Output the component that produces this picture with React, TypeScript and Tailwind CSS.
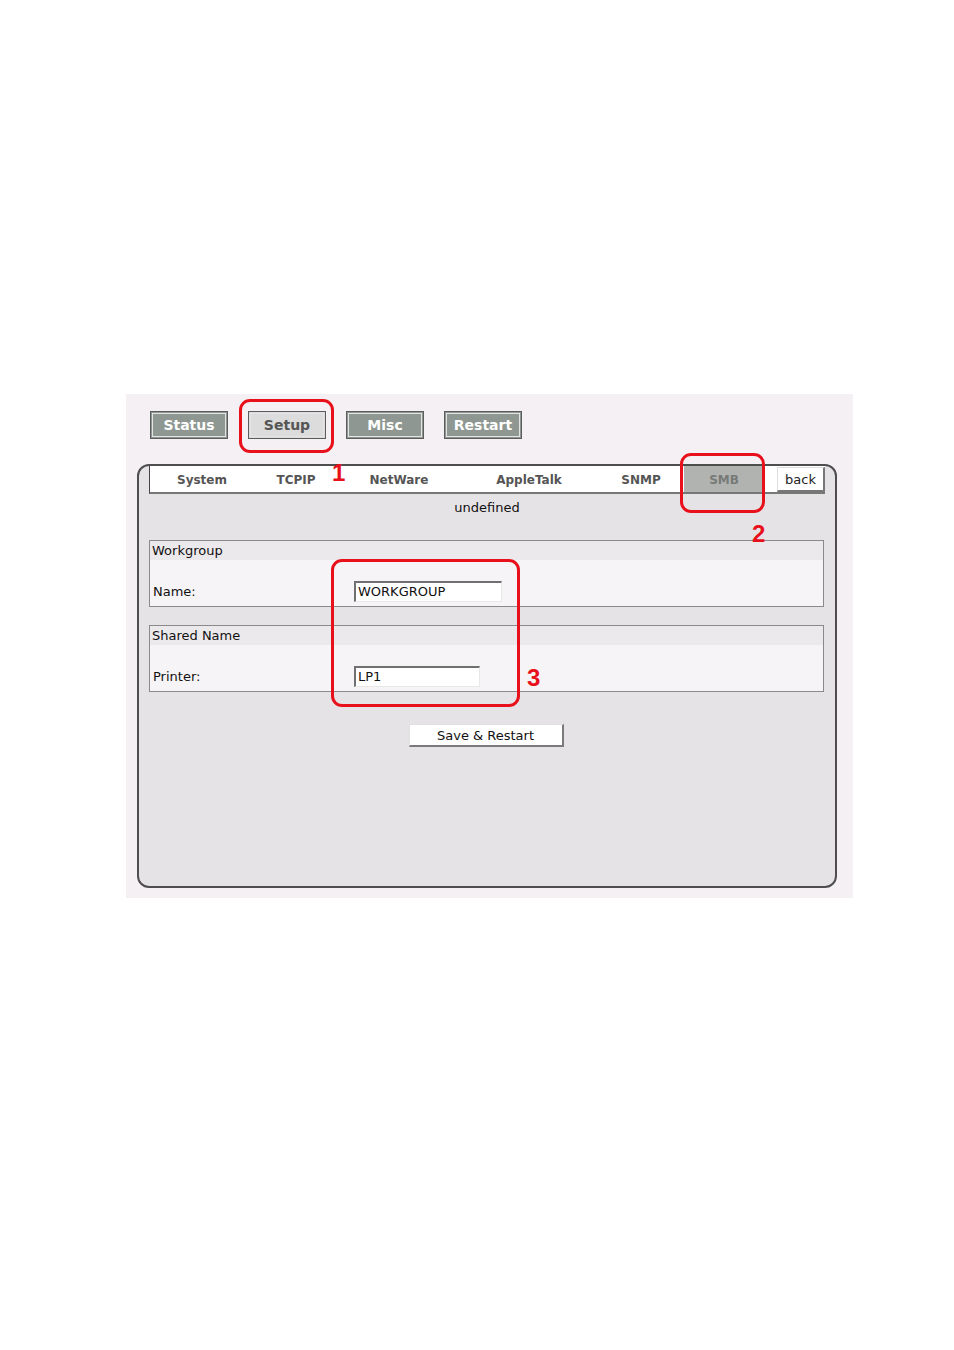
import React from "react";

const F = { fontFamily: '"DejaVu Sans", Verdana, sans-serif' };

function TopButton({ label, active }: { label: string; active?: boolean }) {
  return (
    <div
      className={`w-[78px] h-[28px] border border-[#5c5c5c] p-[1px] ${active ? "bg-[#dcdcdc]" : "bg-[#8e9791]"}`}
    >
      <div
        className={`w-full h-full border border-[#e4e4e4] flex items-center justify-center pt-[1px] text-[14px] font-bold ${active ? "text-[#555]" : "text-white"}`}
      >
        {label}
      </div>
    </div>
  );
}

function Tab({ label, w, active }: { label: string; w: string; active?: boolean }) {
  return (
    <div
      className={`${w} h-full flex items-center justify-center pt-[2px] text-[12px] font-bold ${active ? "bg-[#b1b3b1] text-[#777a77]" : "text-[#555]"}`}
    >
      {label}
    </div>
  );
}

function Section({ title, label, value, inputW }: { title: string; label: string; value: string; inputW: string }) {
  return (
    <div className="w-[675px] border border-[#8a8a8a] bg-[#f6f4f6]">
      <div className="h-[19px] bg-[#ece9ec] pl-[2px] text-[13px] leading-[19px] text-[#111]">{title}</div>
      <div className="h-[46px] flex items-end pb-[4px]">
        <div className="w-[204px] pl-[3px] text-[13px] text-[#111] leading-[21px] pt-[2px]">{label}</div>
        <div
          className={`${inputW} h-[21px] bg-white border-t-2 border-l-2 border-t-[#707070] border-l-[#707070] border-b border-r border-b-[#e8e8e8] border-r-[#e8e8e8] text-[13px] leading-[18px] pl-[2px] text-[#111]`}
        >
          {value}
        </div>
      </div>
    </div>
  );
}

export default function App() {
  return (
    <div className="w-[954px] h-[1350px] bg-white" style={F}>
      <div className="pt-[394px] pl-[126px]">
        <div className="relative w-[727px] h-[504px] bg-[#f4f0f4]">
          <div className="flex gap-[20px] pl-[24px] pt-[17px]">
            <TopButton label="Status" />
            <TopButton label="Setup" active />
            <TopButton label="Misc" />
            <TopButton label="Restart" />
          </div>
          <div className="ml-[11px] mt-[25px] w-[700px] h-[424px] border-2 border-[#4e4e4e] rounded-[12px] bg-[#e6e3e6] px-[10px] flex flex-col items-start">
            <div className="w-[676px] h-[28px] bg-white border-l border-b-2 border-l-[#444] border-b-[#777] flex items-stretch">
              <Tab label="System" w="w-[104px]" />
              <Tab label="TCPIP" w="w-[84px]" />
              <Tab label="NetWare" w="w-[122px]" />
              <Tab label="AppleTalk" w="w-[138px]" />
              <Tab label="SNMP" w="w-[86px]" />
              <Tab label="SMB" w="w-[80px]" active />
              <div className="w-[13px]" />
              <div className="w-[48px] h-[25px] mt-[1px] pt-[1px] bg-white border-t border-l border-t-[#ddd] border-l-[#ddd] border-r-2 border-b-2 border-r-[#777] border-b-[#777] flex items-center justify-center text-[13px] text-[#222]">
                back
              </div>
            </div>
            <div className="w-[676px] text-center text-[13px] text-[#111] mt-[6px] leading-[16px]">undefined</div>
            <div className="mt-[24px]">
              <Section title="Workgroup" label="Name:" value="WORKGROUP" inputW="w-[148px]" />
            </div>
            <div className="mt-[18px]">
              <Section title="Shared Name" label="Printer:" value="LP1" inputW="w-[126px]" />
            </div>
            <div className="w-[676px] flex justify-center mt-[32px]">
              <div className="w-[155px] h-[23px] ml-[-2px] bg-white border-t border-l border-t-[#e0e0e0] border-l-[#e0e0e0] border-r-2 border-b-2 border-r-[#7a7a7a] border-b-[#7a7a7a] flex items-center justify-center pt-[1px] text-[13px] text-[#111]">
                Save &amp; Restart
              </div>
            </div>
          </div>

          {/* annotations */}
          <div className="absolute left-[113px] top-[5px] w-[95px] h-[54px] border-[3px] border-[#e8101a] rounded-[11px]" />
          <div className="absolute left-[554px] top-[59px] w-[85px] h-[60px] border-[3px] border-[#e8101a] rounded-[11px]" />
          <div className="absolute left-[205px] top-[165px] w-[189px] h-[148px] border-[3px] border-[#e8101a] rounded-[11px]" />
          <div className="absolute left-[206px] top-[67px] text-[24px] leading-[24px] font-bold text-[#e8101a]" style={{ fontFamily: '"Liberation Sans", Arial, sans-serif' }}>1</div>
          <div className="absolute left-[626px] top-[128px] text-[24px] leading-[24px] font-bold text-[#e8101a]" style={{ fontFamily: '"Liberation Sans", Arial, sans-serif' }}>2</div>
          <div className="absolute left-[401px] top-[272px] text-[24px] leading-[24px] font-bold text-[#e8101a]" style={{ fontFamily: '"Liberation Sans", Arial, sans-serif' }}>3</div>
        </div>
      </div>
    </div>
  );
}
